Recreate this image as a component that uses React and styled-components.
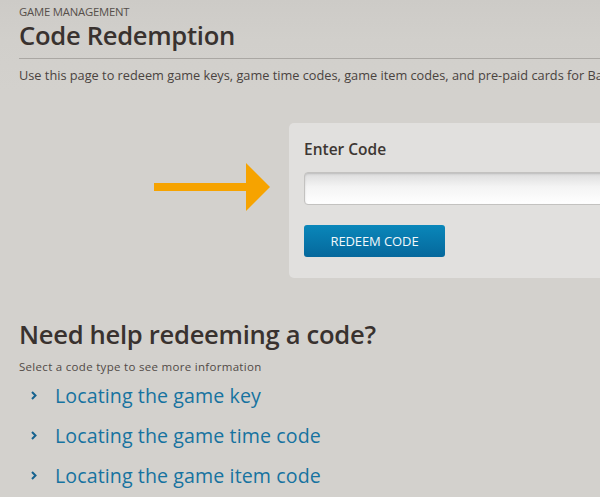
import React from "react";
import styled, { createGlobalStyle } from "styled-components";

const Global = createGlobalStyle`
  html, body {
    margin: 0;
    padding: 0;
    background: #d3d1cd;
    overflow: hidden;
  }
  body {
    font-family: "Open Sans", "Noto Sans", sans-serif;
    color: #3a3431;
  }
`;

const Page = styled.div`
  width: 600px;
  height: 497px;
  overflow: hidden;
  background: linear-gradient(180deg, #cdcbc7 0, #d1cfcb 40px, #d3d1cd 90px);
`;

const Header = styled.header`
  padding: 5px 0 0 19px;
`;

const Kicker = styled.div`
  font-size: 11.3px;
  line-height: 14px;
  text-transform: uppercase;
  color: #564f4b;
  letter-spacing: -0.2px;
`;

const Title = styled.h1`
  margin: 0;
  font-size: 25.6px;
  line-height: 34px;
  font-weight: 600;
  color: #39322f;
  letter-spacing: -0.3px;
  padding-bottom: 5px;
  border-bottom: 1px solid #aaa7a3;
`;

const Intro = styled.p`
  margin: 0;
  padding: 7px 0 0 19px;
  font-size: 12.75px;
  line-height: 18px;
  white-space: nowrap;
  overflow: hidden;
  color: #4a4340;
`;

const RedeemRow = styled.section`
  display: flex;
  margin-top: 39px;
`;

const ArrowBox = styled.div`
  flex: 0 0 289px;
  padding: 40px 0 0 154px;
  box-sizing: border-box;
`;

const Panel = styled.div`
  flex: 0 0 420px;
  box-sizing: border-box;
  height: 155px;
  padding: 16px 0 0 15px;
  background: #e1e0de;
  border-radius: 5px;
`;

const Label = styled.label`
  display: block;
  font-size: 15.5px;
  line-height: 20px;
  font-weight: 600;
  color: #3d3733;
`;

const Input = styled.input`
  display: block;
  box-sizing: border-box;
  width: 360px;
  height: 33px;
  margin-top: 13px;
  border: 1px solid #c3c2c0;
  border-radius: 4px;
  background: linear-gradient(180deg, #dcdcdc 0, #f4f4f4 45%, #ffffff 100%);
  box-shadow: inset 0 1px 2px rgba(0, 0, 0, 0.15);
  outline: none;
`;

const Button = styled.button`
  display: block;
  width: 141px;
  height: 32px;
  margin-top: 20px;
  border: 0;
  border-radius: 3px;
  background: linear-gradient(180deg, #0a87ba 0, #05689c 100%);
  color: #f2f8fb;
  font-family: inherit;
  font-size: 13px;
  letter-spacing: -0.1px;
  text-transform: uppercase;
  cursor: pointer;
`;

const Help = styled.section`
  padding: 41px 0 0 19px;
`;

const HelpTitle = styled.h2`
  margin: 0;
  font-size: 25.6px;
  line-height: 32px;
  font-weight: 600;
  color: #39322f;
  letter-spacing: -0.3px;
`;

const HelpNote = styled.p`
  margin: 9px 0 0;
  font-size: 11.5px;
  line-height: 14px;
  letter-spacing: 0.3px;
  color: #514a46;
`;

const Links = styled.ul`
  list-style: none;
  margin: 1px 0 0;
  padding: 0 0 0 12px;
`;

const LinkItem = styled.li`
  display: flex;
  align-items: center;
  height: 40px;
  gap: 14px;
`;

const Chevron = styled.span`
  display: inline-flex;
  width: 10px;
  color: #15628f;
`;

const HelpLink = styled.a`
  font-size: 19.6px;
  color: #1673a0;
  text-decoration: none;
  letter-spacing: 0.1px;
`;

const links = [
  "Locating the game key",
  "Locating the game time code",
  "Locating the game item code",
];

const Arrow = () => (
  <svg width="116" height="48" viewBox="0 0 116 48">
    <rect x="0" y="20" width="94" height="8" fill="#f6a300" />
    <polygon points="92,0 116,24 92,48" fill="#f6a300" />
  </svg>
);

const Chev = () => (
  <svg width="6" height="9" viewBox="0 0 6 9">
    <path d="M1 1 L4.5 4.5 L1 8" fill="none" stroke="currentColor" strokeWidth="2" />
  </svg>
);

export default function App() {
  return (
    <Page>
      <Global />
      <Header>
        <Kicker>Game Management</Kicker>
        <Title>Code Redemption</Title>
      </Header>
      <Intro>
        Use this page to redeem game keys, game time codes, game item codes, and pre-paid cards for Battle.net
      </Intro>
      <RedeemRow>
        <ArrowBox>
          <Arrow />
        </ArrowBox>
        <Panel>
          <Label htmlFor="code">Enter Code</Label>
          <Input id="code" type="text" />
          <Button>Redeem Code</Button>
        </Panel>
      </RedeemRow>
      <Help>
        <HelpTitle>Need help redeeming a code?</HelpTitle>
        <HelpNote>Select a code type to see more information</HelpNote>
        <Links>
          {links.map((text) => (
            <LinkItem key={text}>
              <Chevron>
                <Chev />
              </Chevron>
              <HelpLink href="#">{text}</HelpLink>
            </LinkItem>
          ))}
        </Links>
      </Help>
    </Page>
  );
}
